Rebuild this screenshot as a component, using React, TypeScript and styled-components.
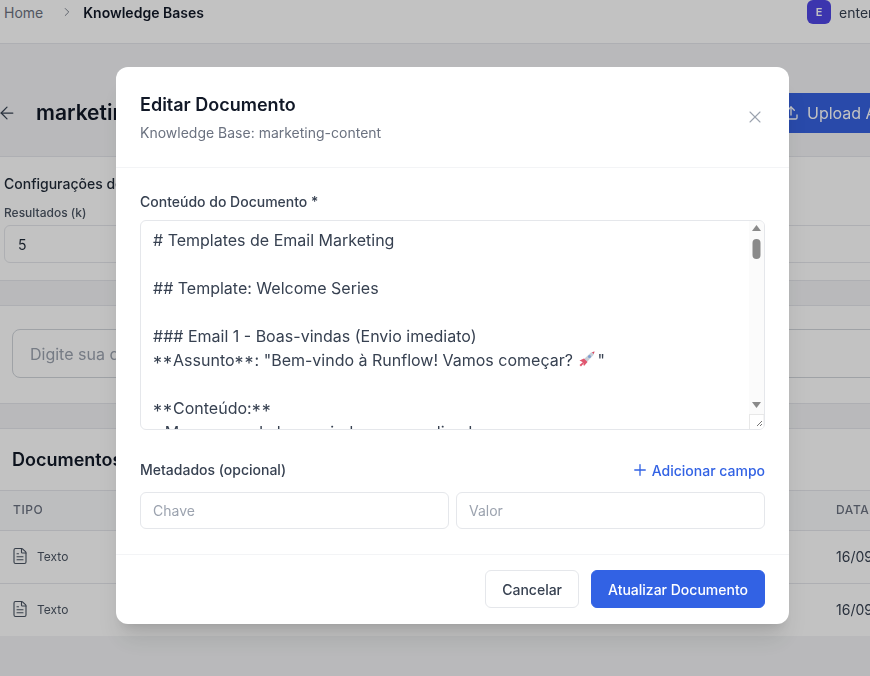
import React from "react";
import styled, { createGlobalStyle } from "styled-components";
import { ArrowLeft, ChevronRight, FileText, Plus, Upload, X } from "lucide-react";

const Global = createGlobalStyle`
  html, body { margin: 0; padding: 0; background: #f3f4f6; }
  body { font-family: Inter, "Liberation Sans", sans-serif; overflow: hidden; }
  * { box-sizing: border-box; }
`;

const Viewport = styled.div`
  position: relative;
  width: 870px;
  height: 676px;
  overflow: hidden;
  filter: blur(0.5px);
`;

const Page = styled.div`
  width: 960px;
  display: flex;
  flex-direction: column;
`;

const TopBar = styled.header`
  height: 44px;
  background: #fff;
  border-bottom: 1px solid #e5e7eb;
  padding: 0 0 20px 4px;
  display: flex;
  align-items: center;
  font-size: 14px;
  color: #6b7280;
`;

const Crumbs = styled.nav`
  display: flex;
  align-items: center;
  gap: 9px;
  flex: 1;
  padding-top: 1px;
`;

const HomeCrumb = styled.span`
  margin-right: 8px;
`;

const Current = styled.span`
  color: #111827;
  font-weight: 600;
  font-size: 14px;
`;

const Account = styled.div`
  width: 153px;
  display: flex;
  align-items: center;
  gap: 8px;
  color: #374151;
`;

const AccountName = styled.span`
  padding-top: 1px;
`;

const Avatar = styled.span`
  width: 24px;
  height: 24px;
  border-radius: 6px;
  background: #4f46e5;
  color: #fff;
  font-size: 11px;
  font-weight: 600;
  display: flex;
  align-items: center;
  justify-content: center;
`;

const TitleBar = styled.section`
  height: 113px;
  padding: 49px 0 0 0;
  border-bottom: 1px solid #e5e7eb;
  display: flex;
  align-items: flex-start;
  color: #374151;
`;

const Back = styled.span`
  display: flex;
  height: 40px;
  width: 39px;
  align-items: center;
  margin-left: -3px;
`;

const PageTitle = styled.h1`
  flex: 1;
  margin: 0;
  line-height: 40px;
  font-size: 21px;
  font-weight: 600;
  color: #111827;
`;

const UploadButton = styled.button`
  width: 191px;
  height: 40px;
  border: 0;
  border-radius: 6px;
  background: #3762e0;
  color: #fff;
  font: 400 16px Inter, sans-serif;
  padding: 0 0 0 14px;
  display: flex;
  align-items: center;
  gap: 8px;
`;

const ConfigPanel = styled.section`
  height: 124px;
  background: #fff;
  border-bottom: 1px solid #e5e7eb;
  padding: 18px 0 0 4px;
`;

const ConfigTitle = styled.h2`
  margin: 0;
  font-size: 14px;
  line-height: 18px;
  font-weight: 500;
  color: #1f2937;
`;

const FieldLabel = styled.div`
  margin-top: 12px;
  font-size: 12px;
  line-height: 16px;
  font-weight: 500;
  color: #4b5563;
`;

const ConfigInput = styled.div`
  margin-top: 4px;
  height: 38px;
  border: 1px solid #e5e7eb;
  border-radius: 6px;
  background: #fff;
  padding: 0 13px;
  display: flex;
  align-items: center;
  font-size: 14px;
  color: #1f2937;
`;

const ChatPanel = styled.section`
  margin-top: 24px;
  height: 99px;
  background: #fff;
  border-top: 1px solid #e5e7eb;
  border-bottom: 1px solid #e5e7eb;
  padding: 23px 0 0 12px;
`;

const ChatInput = styled.div`
  height: 49px;
  border: 1px solid #d1d5db;
  border-radius: 8px;
  background: #fff;
  padding: 0 17px;
  display: flex;
  align-items: center;
  font-size: 16px;
  color: #9ca3af;
`;

const DocsPanel = styled.section`
  margin-top: 24px;
  height: 208px;
  background: #fff;
  border-top: 1px solid #e5e7eb;
  border-bottom: 1px solid #e5e7eb;
`;

const DocsTitle = styled.h2`
  margin: 0;
  height: 61px;
  padding-left: 12px;
  display: flex;
  align-items: center;
  font-size: 18px;
  font-weight: 600;
  color: #111827;
`;

const TableRow = styled.div<{ $head?: boolean }>`
  height: ${(p) => (p.$head ? 40 : 53)}px;
  padding-bottom: 2px;
  display: grid;
  grid-template-columns: 836px 1fr;
  align-items: center;
  border-top: 1px solid #e5e7eb;
  background: ${(p) => (p.$head ? "#f9fafb" : "#fff")};
  font-size: ${(p) => (p.$head ? 12 : 14)}px;
  font-weight: ${(p) => (p.$head ? 500 : 400)};
  letter-spacing: ${(p) => (p.$head ? "0.6px" : 0)};
  color: ${(p) => (p.$head ? "#6b7280" : "#374151")};
`;

const HeadCell = styled.span`
  padding-left: 13px;
`;

const TypeCell = styled.span`
  padding-left: 11px;
  display: flex;
  align-items: center;
  gap: 8px;
  font-size: 12px;
  color: #4b5563;
`;

const Backdrop = styled.div`
  position: absolute;
  inset: 0;
  background: rgba(0, 0, 0, 0.24);
  padding: 67px 0 0 116px;
`;

const Modal = styled.div`
  width: 673px;
  height: 557px;
  background: #fff;
  border-radius: 12px;
  box-shadow: 0 20px 25px -5px rgba(0, 0, 0, 0.1), 0 8px 10px -6px rgba(0, 0, 0, 0.1);
  display: flex;
  flex-direction: column;
`;

const ModalHeader = styled.div`
  height: 101px;
  border-bottom: 1px solid #f3f4f6;
  padding: 26px 24px 0;
  display: flex;
  justify-content: space-between;
`;

const ModalTitle = styled.h3`
  margin: 0;
  font-size: 18px;
  line-height: 24px;
  font-weight: 600;
  color: #111827;
`;

const ModalSub = styled.p`
  margin: 6px 0 0;
  font-size: 14px;
  line-height: 20px;
  color: #6b7280;
`;

const CloseButton = styled.button`
  width: 20px;
  height: 20px;
  margin-top: 14px;
  border: 0;
  padding: 0;
  background: none;
  color: #9ca3af;
  display: flex;
  align-items: center;
  justify-content: center;
`;

const ModalBody = styled.div`
  flex: 1;
  padding: 24px 24px 0;
`;

const BodyLabel = styled.div`
  font-size: 14px;
  line-height: 20px;
  font-weight: 500;
  color: #374151;
`;

const EditorFrame = styled.div`
  position: relative;
  margin-top: 8px;
  width: 625px;
  height: 210px;
  border: 1px solid #e5e7eb;
  border-radius: 6px;
  overflow: hidden;
`;

const ContentEditor = styled.div`
  height: 100%;
  padding: 7px 27px 0 12px;
  overflow: hidden;
  white-space: pre-wrap;
  font-size: 16px;
  line-height: 24px;
  color: #374151;
`;

const Stars = styled.span`
  font-size: 18px;
  line-height: 0;
  vertical-align: -3.5px;
  letter-spacing: 1px;
`;

const ScrollRail = styled.svg`
  position: absolute;
  top: 0;
  right: 0;
  width: 15px;
  height: 208px;
`;

const Rocket = styled.svg`
  width: 20px;
  height: 20px;
  vertical-align: -3px;
`;

const MetaHeader = styled.div`
  margin-top: 30px;
  height: 20px;
  display: flex;
  align-items: center;
  justify-content: space-between;
`;

const AddField = styled.span`
  display: flex;
  align-items: center;
  gap: 3px;
  font-size: 14px;
  font-weight: 500;
  color: #3262e4;
`;

const MetaRow = styled.div`
  margin-top: 12px;
  display: grid;
  grid-template-columns: 309px 309px;
  gap: 7px;
`;

const MetaInput = styled.div`
  height: 37px;
  border: 1px solid #e5e7eb;
  border-radius: 6px;
  padding: 0 12px;
  display: flex;
  align-items: center;
  font-size: 14px;
  color: #9ca3af;
`;

const ModalFooter = styled.div`
  height: 70px;
  border-top: 1px solid #f3f4f6;
  padding: 15px 24px 0;
  display: flex;
  justify-content: flex-end;
  gap: 12px;
`;

const FooterButton = styled.button<{ $primary?: boolean }>`
  height: 38px;
  padding: 0 16px;
  border-radius: 6px;
  border: 1px solid ${(p) => (p.$primary ? "#3262e4" : "#e5e7eb")};
  background: ${(p) => (p.$primary ? "#3262e4" : "#fff")};
  color: ${(p) => (p.$primary ? "#fff" : "#374151")};
  font: 500 14px Inter, sans-serif;
`;

export default function App() {
  return (
    <Viewport>
      <Global />
      <Page>
        <TopBar>
          <Crumbs>
            <HomeCrumb>Home</HomeCrumb>
            <ChevronRight size={14} strokeWidth={1.5} />
            <Current>Knowledge Bases</Current>
          </Crumbs>
          <Account>
            <Avatar>E</Avatar>
            <AccountName>enterprise</AccountName>
          </Account>
        </TopBar>
        <TitleBar>
          <Back>
            <ArrowLeft size={20} strokeWidth={1.5} />
          </Back>
          <PageTitle>marketing-content</PageTitle>
          <UploadButton>
            <Upload size={16} strokeWidth={2} />
            Upload Arquivo
          </UploadButton>
        </TitleBar>
        <ConfigPanel>
          <ConfigTitle>Configurações de Busca</ConfigTitle>
          <FieldLabel>Resultados (k)</FieldLabel>
          <ConfigInput>5</ConfigInput>
        </ConfigPanel>
        <ChatPanel>
          <ChatInput>Digite sua consulta</ChatInput>
        </ChatPanel>
        <DocsPanel>
          <DocsTitle>Documentos</DocsTitle>
          <TableRow $head>
            <HeadCell>TIPO</HeadCell>
            <span>DATA</span>
          </TableRow>
          <TableRow>
            <TypeCell>
              <FileText size={18} strokeWidth={1.5} />
              Texto
            </TypeCell>
            <span>16/09/2025</span>
          </TableRow>
          <TableRow>
            <TypeCell>
              <FileText size={18} strokeWidth={1.5} />
              Texto
            </TypeCell>
            <span>16/09/2025</span>
          </TableRow>
        </DocsPanel>
      </Page>
      <Backdrop>
        <Modal>
          <ModalHeader>
            <div>
              <ModalTitle>Editar Documento</ModalTitle>
              <ModalSub>Knowledge Base: marketing-content</ModalSub>
            </div>
            <CloseButton>
              <X size={26} strokeWidth={1.3} />
            </CloseButton>
          </ModalHeader>
          <ModalBody>
            <BodyLabel>Conteúdo do Documento *</BodyLabel>
            <EditorFrame>
              <ContentEditor>
                {"# Templates de Email Marketing\n\n## Template: Welcome Series\n\n### Email 1 - Boas-vindas (Envio imediato)\n"}
                <Stars>**</Stars>Assunto<Stars>**</Stars>
                {': "Bem-vindo à Runflow! Vamos começar? '}
                <Rocket viewBox="0 0 20 20" aria-hidden="true">
                  <path d="M6 11 L14 3.5 L17.5 2.5 L16.5 6 L9 14 Z" fill="#c9ced6" />
                  <circle cx="12.5" cy="7.5" r="1.5" fill="#7f9fd1" />
                  <path d="M15 3.2 L17.5 2.5 L16.8 5 Z" fill="#e0435f" />
                  <path d="M7 9.5 L2.5 11.5 L5.5 13 L7 17 L10.5 13 Z M2.5 16 L5.5 13.4 L6.6 14.4 L4 17.5 Z" fill="#e0566f" />
                </Rocket>
                {'"\n\n'}
                <Stars>**</Stars>Conteúdo:<Stars>**</Stars>
                {"\n- Mensagem de boas-vindas personalizada"}
              </ContentEditor>
              <ScrollRail viewBox="0 0 15 208" aria-hidden="true">
                <rect x="0" y="0" width="15" height="208" fill="#fbfbfb" />
                <path d="M7.5 4 L12 10 L3 10 Z" fill="#8a8a8a" />
                <rect x="3.5" y="18" width="8" height="20" rx="4" fill="#8a8a8a" />
                <path d="M3 181 L12 181 L7.5 187 Z" fill="#8a8a8a" />
                <rect x="0.5" y="193.5" width="14.5" height="15" fill="#fff" stroke="#e8e8e8" />
                <path d="M8 205 L13 200 M11 205 L13 203" stroke="#777" strokeWidth="1" />
              </ScrollRail>
            </EditorFrame>
            <MetaHeader>
              <BodyLabel>Metadados (opcional)</BodyLabel>
              <AddField>
                <Plus size={18} strokeWidth={1.75} />
                Adicionar campo
              </AddField>
            </MetaHeader>
            <MetaRow>
              <MetaInput>Chave</MetaInput>
              <MetaInput>Valor</MetaInput>
            </MetaRow>
          </ModalBody>
          <ModalFooter>
            <FooterButton>Cancelar</FooterButton>
            <FooterButton $primary>Atualizar Documento</FooterButton>
          </ModalFooter>
        </Modal>
      </Backdrop>
    </Viewport>
  );
}
